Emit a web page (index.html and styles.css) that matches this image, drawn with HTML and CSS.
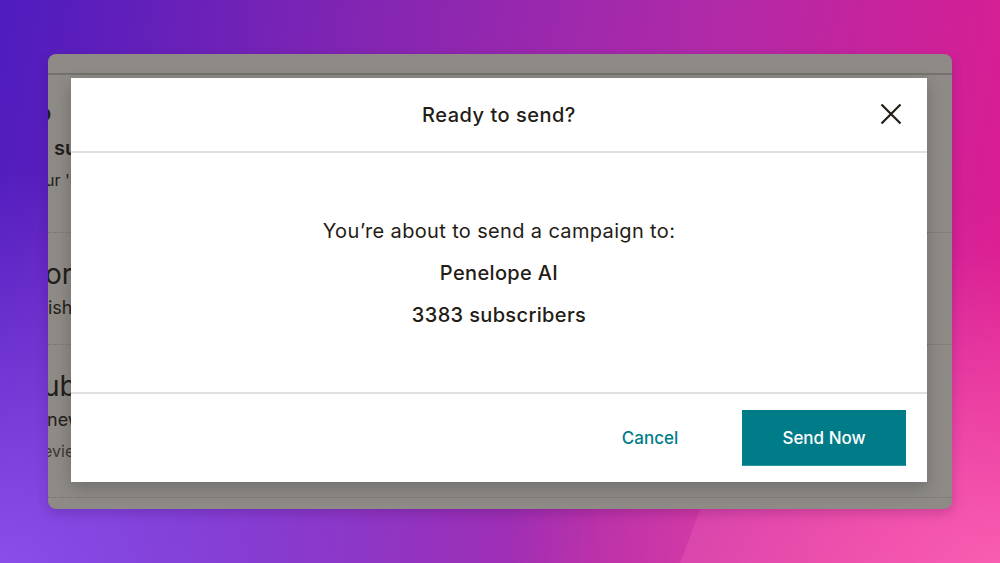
FILE: index.html
```html
<!DOCTYPE html>
<html lang="en">
<head>
    <meta charset="UTF-8">
    <meta name="viewport" content="width=device-width, initial-scale=1.0">
    <title>Ready to send?</title>
    <link rel="stylesheet" href="styles.css">
</head>
<body>
    <div class="window">
        <div class="titlebar"></div>
        <div class="page">
            <div class="section first">
                <p class="heading cut-lg">o</p>
                <p class="label pad">subject line</p>
                <p class="text cut-sm">ur 'Ready to send?' subject</p>
            </div>
            <div class="section second">
                <p class="big cut-sm">or name</p>
                <p class="sub">ish the sender name</p>
            </div>
            <div class="section third">
                <p class="big cut-md">ub list</p>
                <p class="sub cut-xs">new audience</p>
                <p class="text light cut-md">eview the recipients</p>
            </div>
        </div>

        <!-- modal sits over the dimmed page -->
        <div class="modal">
            <div class="modal-head">
                <h2>Ready to send?</h2>
                <button class="close" aria-label="Close">
                    <svg width="22" height="22" viewBox="0 0 22 22">
                        <path d="M1.5 1.5 L20.5 20.5 M20.5 1.5 L1.5 20.5" stroke="#241c15" stroke-width="2.2" fill="none"/>
                    </svg>
                </button>
            </div>
            <div class="modal-body">
                <p class="intro">You’re about to send a campaign to:</p>
                <p class="strong">Penelope AI</p>
                <p class="strong">3383 subscribers</p>
            </div>
            <div class="modal-foot">
                <button class="btn-cancel">Cancel</button>
                <button class="btn-send">Send Now</button>
            </div>
        </div>
    </div>
</body>
</html>
```

FILE: styles.css
```css
body {
    position: relative;
    margin: 0;
    height: 563px;
    overflow: hidden;
    font-family: Inter, "Open Sans", sans-serif;
    background-color: #9a30b4;
    background-image:
        radial-gradient(ellipse 60% 70% at 0% 100%, rgba(140, 80, 235, 0.95), rgba(140, 80, 235, 0) 100%),
        radial-gradient(ellipse 50% 55% at 100% 100%, rgba(246, 84, 170, 1), rgba(246, 84, 170, 0) 100%),
        linear-gradient(100deg, #4e1cbf 0%, #8526b2 35%, #b02aa8 65%, #e21b8e 100%);
}
/* lighter wedge in the wallpaper, bottom right */
body::before {
    content: "";
    position: absolute;
    left: 0;
    top: 0;
    width: 1000px;
    height: 563px;
    background: linear-gradient(to bottom, rgba(255, 130, 205, 0) 35%, rgba(255, 130, 205, 0.2) 100%);
    clip-path: polygon(680px 563px, 892px 0, 1000px 0, 1000px 563px);
}
.window {
    position: relative;
    z-index: 1;
    width: 904px;
    height: 455px;
    margin: 54px 0 0 48px;
    border-radius: 8px;
    background: #8e8b87;
    overflow: hidden;
    box-shadow: 0 4px 12px rgba(40, 0, 60, 0.2);
}
.titlebar {
    height: 19px;
    border-bottom: 2px solid #75716e;
}
.page p {
    margin: 0;
    white-space: nowrap;
    color: #221e1b;
}
.section {
    box-sizing: border-box;
    border-bottom: 1px dotted #75716e;
}
.section.first {
    height: 158px;
    padding-top: 23px;
}
.section.second {
    height: 112px;
    padding-top: 24px;
}
.section.third {
    height: 153px;
    padding-top: 24px;
}
.heading {
    font-size: 24px;
    line-height: 30px;
    font-weight: 500;
}
.label {
    font-size: 20px;
    line-height: 26px;
    font-weight: 600;
    margin-top: 7px !important;
}
.text {
    font-size: 16px;
    line-height: 22px;
    margin-top: 8px !important;
}
.text.light {
    color: #3b3734;
}
.big {
    font-size: 28px;
    line-height: 34px;
}
.sub {
    font-size: 18px;
    line-height: 24px;
    margin-top: 5px !important;
}
.pad { padding-left: 6px; }
.cut-xs { margin-left: -1px !important; }
.cut-sm { margin-left: -3px !important; }
.cut-md { margin-left: -5px !important; }
.cut-lg { margin-left: -11px !important; }

.modal {
    position: absolute;
    left: 23px;
    top: 24px;
    width: 856px;
    height: 404px;
    background: #fff;
    display: flex;
    flex-direction: column;
    box-shadow: 0 6px 16px rgba(0, 0, 0, 0.22);
    color: #241c15;
}
.modal-head {
    position: relative;
    height: 75px;
    box-sizing: border-box;
    border-bottom: 2px solid #e0e0e0;
    display: flex;
    align-items: center;
    justify-content: center;
}
.modal-head h2 {
    margin: 0;
    font-size: 20px;
    font-weight: 500;
    letter-spacing: 0.5px;
}
.close {
    position: absolute;
    right: 25px;
    top: 25px;
    padding: 0;
    border: 0;
    background: none;
    line-height: 0;
    cursor: pointer;
}
.modal-body {
    flex: 1;
    display: flex;
    flex-direction: column;
    align-items: center;
    padding-top: 65px;
    border-bottom: 2px solid #e0e0e0;
}
.modal-body p {
    margin: 0;
    line-height: 26px;
    letter-spacing: 0.35px;
}
.intro {
    font-size: 20px;
    font-weight: 400;
}
.strong {
    font-size: 20px;
    font-weight: 500;
    margin-top: 16px !important;
}
.modal-foot {
    height: 88px;
    box-sizing: border-box;
    display: flex;
    justify-content: flex-end;
    align-items: center;
    gap: 32px;
    padding: 0 21px 0 0;
}
.modal-foot button {
    font-family: inherit;
    font-size: 17px;
    font-weight: 500;
    cursor: pointer;
    border: 0;
}
.btn-cancel {
    background: none;
    color: #007c89;
    width: 120px;
    height: 56px;
}
.btn-send {
    width: 164px;
    height: 56px;
    background: #007c89;
    color: #fff;
    border-bottom: 1px solid #2c95a0 !important;
}
```
